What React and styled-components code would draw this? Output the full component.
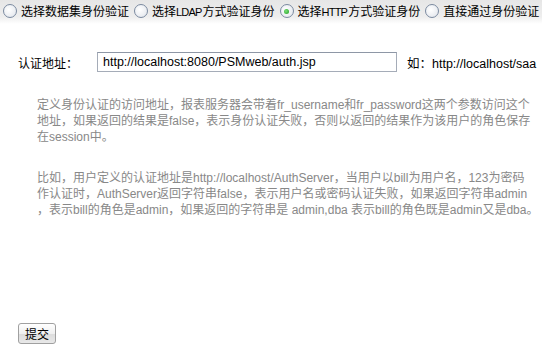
import React from 'react';
import styled, { createGlobalStyle } from 'styled-components';

const GlobalStyle = createGlobalStyle`
  html, body {
    margin: 0;
    padding: 0;
    background: #ffffff;
  }
  body {
    font-family: "Liberation Sans", "Noto Sans CJK SC", sans-serif;
    font-size: 12px;
    color: #000;
  }
`;

const options = [
  { label: ['选择数据集身份验证'], checked: false },
  { label: ['选择', 'LDAP', '方式验证身份'], checked: false },
  { label: ['选择', 'HTTP', '方式验证身份'], checked: true },
  { label: ['直接通过身份验证'], checked: false },
];

function App() {
  return (
    <Page>
      <GlobalStyle />
      <RadioBar>
        {options.map((o, i) => (
          <RadioItem key={i}>
            <RadioMark $checked={o.checked} />
            <span>
              {o.label.map((part, j) =>
                j === 1 ? <Latin key={j}>{part}</Latin> : <span key={j}>{part}</span>
              )}
            </span>
          </RadioItem>
        ))}
      </RadioBar>

      <AddressRow>
        <Label>认证地址：</Label>
        <UrlInput defaultValue="http://localhost:8080/PSMweb/auth.jsp" />
        <Example>如：http://localhost/saa</Example>
      </AddressRow>

      <Note>
        定义身份认证的访问地址，报表服务器会带着fr_username和fr_password这两个参数访问这个<br />
        地址，如果返回的结果是false，表示身份认证失败，否则以返回的结果作为该用户的角色保存<br />
        在session中。
      </Note>

      <Note $top={25}>
        比如，用户定义的认证地址是http://localhost/AuthServer，当用户以bill为用户名，123为密码<br />
        作认证时，AuthServer返回字符串false，表示用户名或密码认证失败，如果返回字符串admin<br />
        ，表示bill的角色是admin，如果返回的字符串是 admin,dba 表示bill的角色既是admin又是dba。
      </Note>

      <Footer>
        <SubmitButton>提交</SubmitButton>
      </Footer>
    </Page>
  );
}

export default App;

const Page = styled.div`
  width: 542px;
  height: 350px;
  overflow: hidden;
  display: flex;
  flex-direction: column;
  white-space: nowrap;
`;

const RadioBar = styled.div`
  display: flex;
  align-items: center;
  height: 24px;
  padding: 0 0 0 3px;
  background: linear-gradient(#e6e6e6, #eeeeee 70%, #ffffff);
  gap: 5px;
`;

const RadioItem = styled.label`
  display: flex;
  flex: none;
  align-items: center;
  gap: 4px;
  font-size: 12px;
  font-family: "Noto Sans CJK SC", sans-serif;
  color: #000;
  line-height: 16px;
  margin-top: -2px;
`;

const Latin = styled.span`
  font-family: "Liberation Sans", sans-serif;
  font-size: 11px;
  letter-spacing: -0.8px;
  margin-right: 1px;
`;

const RadioMark = styled.span`
  position: relative;
  width: 12px;
  height: 12px;
  border-radius: 50%;
  border: 1px solid #7b8aa0;
  background: radial-gradient(circle at 40% 40%, #ffffff, #dfe3ea);
  flex: none;
  &::after {
    content: '';
    display: ${(p) => (p.$checked ? 'block' : 'none')};
    position: absolute;
    left: 3.5px;
    top: 3.5px;
    width: 5px;
    height: 5px;
    border-radius: 50%;
    background: radial-gradient(circle at 40% 40%, #7be07b, #1d9c1d);
  }
`;

const AddressRow = styled.div`
  display: flex;
  align-items: center;
  margin-top: 28px;
  padding-left: 18px;
`;

const Label = styled.span`
  width: 79px;
  font-family: "Noto Sans CJK SC", sans-serif;
  font-size: 12px;
  flex: none;
`;

const UrlInput = styled.input`
  box-sizing: border-box;
  width: 300px;
  height: 20px;
  flex: none;
  border: 1px solid #a5acb8;
  border-top-color: #8e97a6;
  padding: 0 5px;
  font-family: "Liberation Sans", "Noto Sans CJK SC", sans-serif;
  font-size: 12.5px;
  color: #000;
  outline: none;
`;

const Example = styled.span`
  margin-left: 10px;
  font-size: 12.5px;
  color: #000;
`;

const Note = styled.p`
  margin: ${(p) => p.$top || 25}px 0 0 37px;
  font-size: 12px;
  line-height: 16px;
  color: #888888;
  letter-spacing: 0;
`;

const Footer = styled.div`
  margin-top: auto;
  padding: 0 0 6px 18px;
`;

const SubmitButton = styled.button`
  height: 21px;
  padding: 0 6px;
  border: 1px solid #a0a0a0;
  border-radius: 3px;
  background: linear-gradient(#ffffff, #f0f0f0 50%, #dcdcdc 51%, #e8e8e8);
  font-family: "Noto Sans CJK SC", sans-serif;
  font-size: 12px;
  color: #000;
  line-height: 18px;
`;
